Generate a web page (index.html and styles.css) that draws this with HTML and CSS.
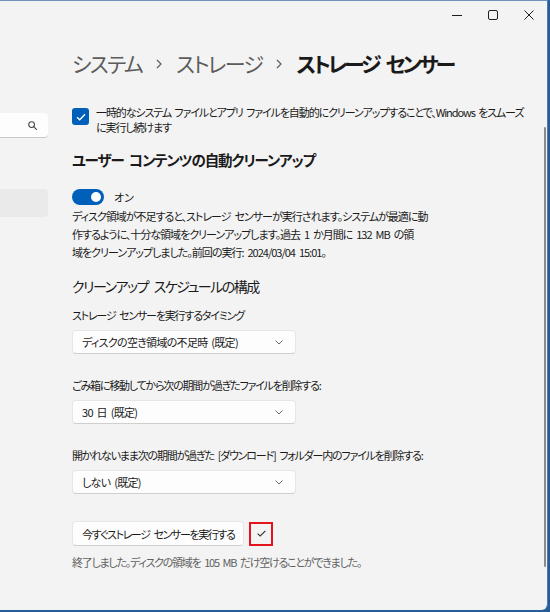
FILE: index.html
```html
<!DOCTYPE html>
<html lang="ja">
<head>
<meta charset="utf-8">
<title>ストレージ センサー</title>
<link rel="stylesheet" href="styles.css">
</head>
<body>
<div class="window">
  <div class="titlebar">
    <div class="cap-btn">
      <svg width="10" height="10" viewBox="0 0 10 10"><path d="M0 5.5H10" stroke="#1f1f1f" stroke-width="1"/></svg>
    </div>
    <div class="cap-btn">
      <svg width="10" height="10" viewBox="0 0 10 10"><rect x="0.5" y="0.5" width="9" height="9" rx="1.5" fill="none" stroke="#1f1f1f" stroke-width="1"/></svg>
    </div>
    <div class="cap-btn">
      <svg width="10" height="10" viewBox="0 0 10 10"><path d="M0.5 0.5L9.5 9.5M9.5 0.5L0.5 9.5" stroke="#1f1f1f" stroke-width="1"/></svg>
    </div>
  </div>
  <div class="body">
    <aside class="sidebar">
      <div class="search">
        <svg width="9" height="9" viewBox="0 0 9 9"><circle cx="3.6" cy="3.6" r="2.9" fill="none" stroke="#4a4a4a" stroke-width="1.1"/><path d="M5.7 5.7L8.4 8.4" stroke="#4a4a4a" stroke-width="1.2" stroke-linecap="round"/></svg>
      </div>
      <div class="nav-item"></div>
    </aside>
    <main class="content">
      <h1 class="breadcrumb">
        <span class="crumb">システム</span>
        <svg class="chev" width="6" height="10" viewBox="0 0 6 10"><path d="M1 1L5 5L1 9" fill="none" stroke="#5c5c5c" stroke-width="1.2"/></svg>
        <span class="crumb">ストレージ</span>
        <svg class="chev" width="6" height="10" viewBox="0 0 6 10"><path d="M1 1L5 5L1 9" fill="none" stroke="#5c5c5c" stroke-width="1.2"/></svg>
        <span class="crumb current">ストレージ センサー</span>
      </h1>

      <div class="check-row">
        <span class="checkbox">
          <svg width="10" height="8" viewBox="0 0 10 8"><path d="M1 4.2L3.7 6.8L9 1.2" fill="none" stroke="#ffffff" stroke-width="1.3"/></svg>
        </span>
        <p class="check-text">一時的なシステム ファイルとアプリ ファイルを自動的にクリーンアップすることで、Windows をスムーズ<br>に実行し続けます</p>
      </div>

      <h2 class="section-title">ユーザー コンテンツの自動クリーンアップ</h2>

      <div class="toggle-row">
        <span class="toggle"><span class="knob"></span></span>
        <span class="toggle-label">オン</span>
      </div>

      <p class="desc">ディスク領域が不足すると、ストレージ センサーが実行されます。システムが最適に動<br>作するように、十分な領域をクリーンアップします。過去 1 か月間に 132 MB の領<br>域をクリーンアップしました。前回の実行: 2024/03/04 15:01。</p>

      <h3 class="sub-title">クリーンアップ スケジュールの構成</h3>

      <div class="field">
        <div class="field-label">ストレージ センサーを実行するタイミング</div>
        <div class="dropdown">
          <span>ディスクの空き領域の不足時 (既定)</span>
          <svg width="8" height="5" viewBox="0 0 8 5"><path d="M0.5 0.5L4 4L7.5 0.5" fill="none" stroke="#6a6a6a" stroke-width="1"/></svg>
        </div>
      </div>

      <div class="field">
        <div class="field-label">ごみ箱に移動してから次の期間が過ぎたファイルを削除する:</div>
        <div class="dropdown">
          <span>30 日 (既定)</span>
          <svg width="8" height="5" viewBox="0 0 8 5"><path d="M0.5 0.5L4 4L7.5 0.5" fill="none" stroke="#6a6a6a" stroke-width="1"/></svg>
        </div>
      </div>

      <div class="field">
        <div class="field-label">開かれないまま次の期間が過ぎた [ダウンロード] フォルダー内のファイルを削除する:</div>
        <div class="dropdown">
          <span>しない (既定)</span>
          <svg width="8" height="5" viewBox="0 0 8 5"><path d="M0.5 0.5L4 4L7.5 0.5" fill="none" stroke="#6a6a6a" stroke-width="1"/></svg>
        </div>
      </div>

      <div class="run-row">
        <button class="run-btn">今すぐストレージ センサーを実行する</button>
        <span class="done-mark">
          <svg width="9" height="7" viewBox="0 0 9 7"><path d="M0.6 3.6L3.2 6L8.4 0.8" fill="none" stroke="#333333" stroke-width="1.1"/></svg>
        </span>
      </div>
      <p class="result">終了しました。ディスクの領域を 105 MB だけ空けることができました。</p>
    </main>
    <div class="scrollbar"></div>
  </div>
</div>
</body>
</html>
```

FILE: styles.css
```css
* { box-sizing: border-box; }

html, body {
  margin: 0;
  padding: 0;
  background: #255d99;
}

body {
  width: 550px;
  height: 612px;
  overflow: hidden;
  font-family: "Noto Sans CJK JP", "Noto Sans", sans-serif;
  font-feature-settings: "palt";
  color: #1a1a1a;
}

.window {
  width: 548px;
  height: 610px;
  background: #f3f3f3;
  border-top: 1px solid #6f93ba;
  border-right: 1px solid #4f7cab;
  border-bottom-right-radius: 6px;
  display: flex;
  flex-direction: column;
  position: relative;
  overflow: hidden;
}

.titlebar {
  flex: none;
  height: 28px;
  display: flex;
  justify-content: flex-end;
}

.cap-btn {
  width: 36px;
  height: 28px;
  display: flex;
  align-items: center;
  justify-content: center;
}

.body {
  flex: 1;
  display: flex;
  min-width: 0;
}

.sidebar {
  flex: none;
  width: 48px;
  padding-top: 84px;
  display: flex;
  flex-direction: column;
}

.search {
  height: 25px;
  background: #fdfdfd;
  border-radius: 0 4px 4px 0;
  border-bottom: 1px solid #c9c9c9;
  display: flex;
  align-items: center;
  justify-content: flex-end;
  padding-right: 11px;
}

.nav-item {
  margin-top: 51px;
  height: 28px;
  background: #eaeaea;
  border-radius: 0 4px 4px 0;
}

.content {
  flex: 1;
  min-width: 0;
  padding-left: 24px;
  padding-top: 16px;
}

.breadcrumb {
  margin: 0;
  height: 36px;
  display: flex;
  align-items: center;
  gap: 14px;
  font-size: 21px;
  letter-spacing: -1.6px;
  line-height: 36px;
  white-space: nowrap;
}

.crumb { color: #5c5c5c; font-weight: 400; }
.crumb.current {
  color: #1a1a1a;
  font-weight: 700;
  letter-spacing: -3px;
  word-spacing: 5px;
}

.chev { flex: none; margin-top: 2px; }

.check-row {
  margin-top: 24px;
  display: flex;
  align-items: flex-start;
  gap: 7px;
}

.checkbox {
  flex: none;
  width: 17px;
  height: 17px;
  margin-top: 3px;
  background: #005fb8;
  border-radius: 3px;
  display: flex;
  align-items: center;
  justify-content: center;
}

.check-text {
  margin: 0;
  font-size: 11px;
  letter-spacing: -1.1px;
  word-spacing: 2px;
  line-height: 15px;
  white-space: nowrap;
}

.section-title {
  margin: 14px 0 0;
  font-size: 14.5px;
  letter-spacing: -1.1px;
  word-spacing: 3px;
  line-height: 22px;
  font-weight: 700;
}

.toggle-row {
  margin-top: 18px;
  height: 16px;
  display: flex;
  align-items: center;
  gap: 10px;
}

.toggle {
  width: 32px;
  height: 16px;
  border-radius: 8px;
  background: #005fb8;
  display: flex;
  align-items: center;
  justify-content: flex-end;
  padding-right: 3px;
}

.knob {
  width: 10px;
  height: 10px;
  border-radius: 50%;
  background: #ffffff;
}

.toggle-label {
  font-size: 11px;
  line-height: 16px;
}

.desc {
  margin: 2px 0 0;
  font-size: 11px;
  letter-spacing: -1px;
  word-spacing: 2.5px;
  line-height: 18px;
  white-space: nowrap;
}

.sub-title {
  margin: 15px 0 0;
  font-size: 14px;
  letter-spacing: -1.5px;
  word-spacing: 4px;
  line-height: 20px;
  font-weight: 400;
}

.field {
  margin-top: 23px;
}

.sub-title + .field { margin-top: 11px; }

.field-label {
  font-size: 11px;
  letter-spacing: -1.2px;
  word-spacing: 2.5px;
  line-height: 16px;
  white-space: nowrap;
}

.dropdown {
  margin-top: 7px;
  width: 224px;
  height: 24px;
  background: #fdfdfd;
  border: 1px solid #e6e6e6;
  border-bottom-color: #cfcfcf;
  border-radius: 4px;
  display: flex;
  align-items: center;
  justify-content: space-between;
  padding: 0 12px 0 9px;
  font-size: 11px;
  letter-spacing: -0.7px;
  word-spacing: 2px;
}

.run-row {
  margin-top: 27px;
  display: flex;
  align-items: center;
  gap: 5px;
}

.run-btn {
  flex: none;
  width: 172px;
  height: 25px;
  background: #fdfdfd;
  border: 1px solid #e6e6e6;
  border-bottom-color: #cfcfcf;
  border-radius: 4px;
  font-family: inherit;
  font-feature-settings: "palt";
  font-size: 11px;
  letter-spacing: -1.4px;
  word-spacing: 3px;
  color: #1a1a1a;
  text-align: left;
  padding: 0 0 0 9px;
  white-space: nowrap;
}

.done-mark {
  flex: none;
  width: 24px;
  height: 24px;
  border: 2px solid #e3141c;
  display: flex;
  align-items: center;
  justify-content: center;
}

.result {
  margin: 8px 0 0;
  font-size: 11px;
  letter-spacing: -1.25px;
  word-spacing: 2.5px;
  line-height: 16px;
  color: #616161;
  white-space: nowrap;
}

.scrollbar {
  position: absolute;
  left: 544px;
  top: 126px;
  width: 2px;
  height: 440px;
  border-radius: 1px;
  background: #8c8c8c;
}
```
